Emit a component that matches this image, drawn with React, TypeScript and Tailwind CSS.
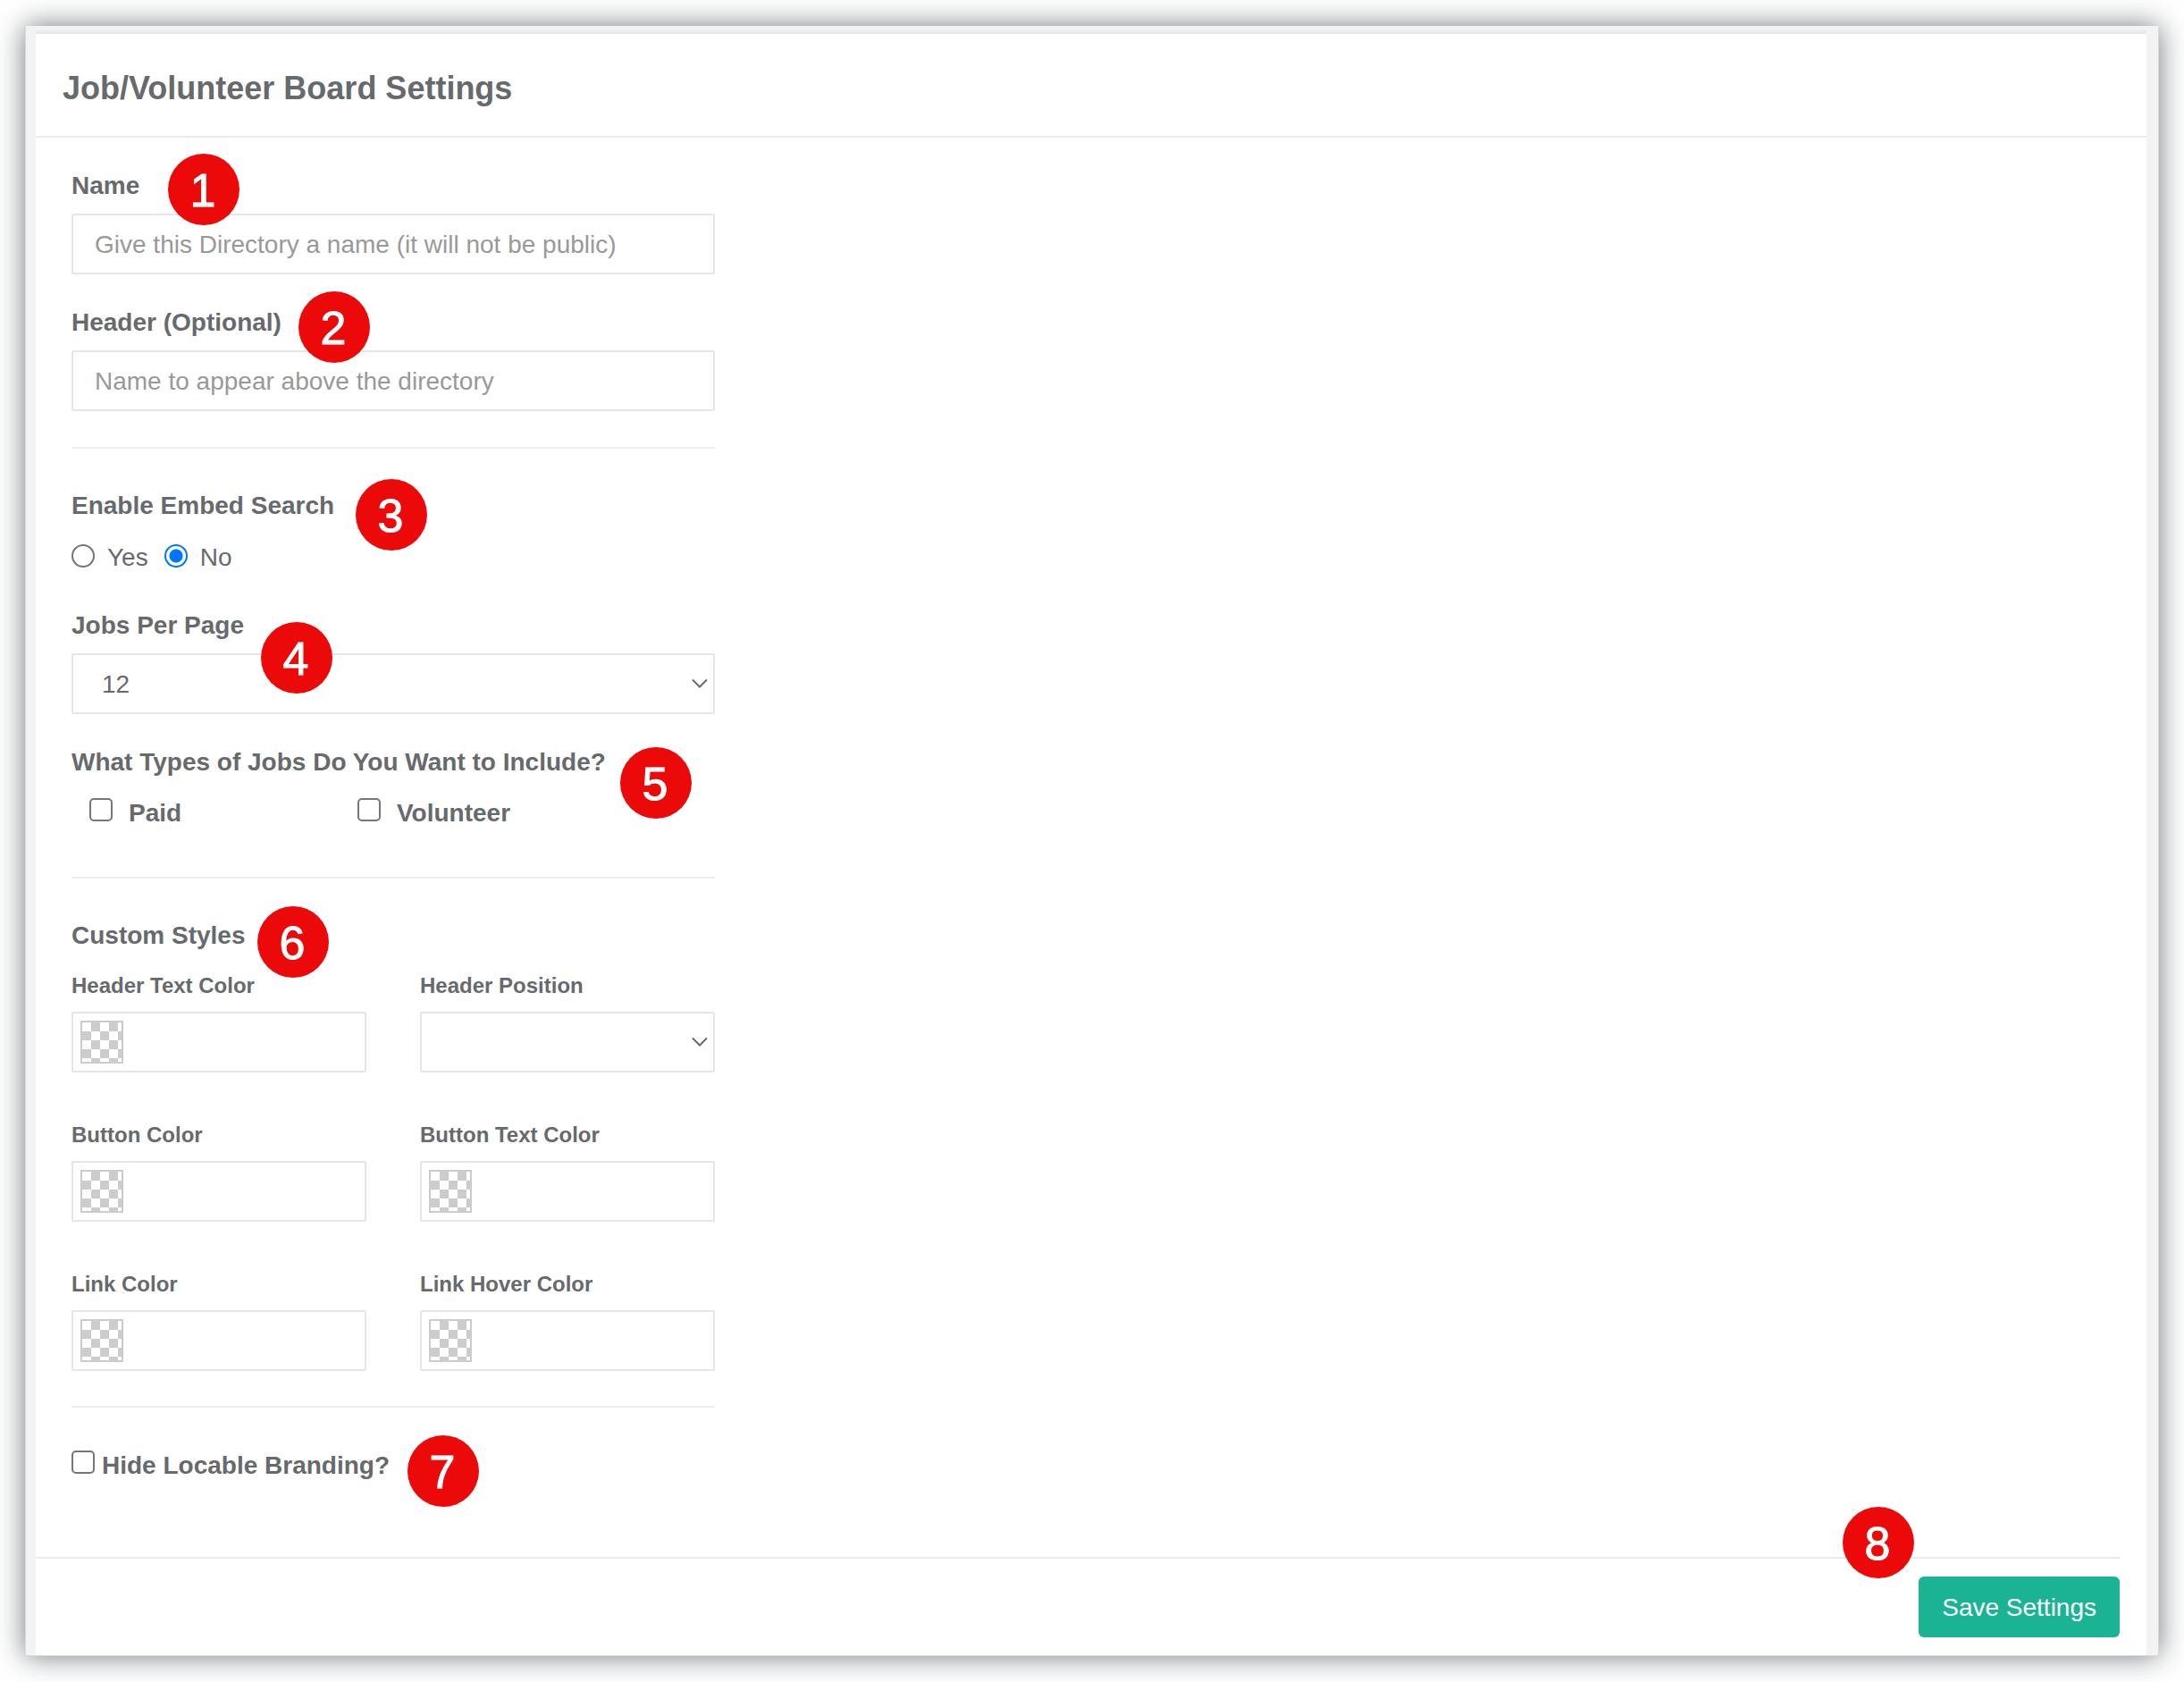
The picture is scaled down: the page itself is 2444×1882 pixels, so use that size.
import { useId, type ReactNode } from "react";

const control =
  "h-[68px] w-full rounded-[2px] border-2 border-[#e5e6e7] bg-white text-[28px] leading-10 outline-none";

function Badge({ n, className }: { n: number; className: string }) {
  return (
    <span
      className={`absolute z-10 flex size-20 items-center justify-center rounded-full bg-[#eb0909] pt-0.5 pr-0.5 text-[52px] leading-none text-white [-webkit-text-stroke:1px_#ffffff] ${className}`}
    >
      {n}
    </span>
  );
}

function Divider({ className }: { className: string }) {
  return <hr className={`border-t-2 border-[#eeeeee] ${className}`} />;
}

function Chevron() {
  return (
    <svg
      viewBox="0 0 18 12"
      className="pointer-events-none absolute top-7 right-2 h-3 w-[18px]"
      fill="none"
      stroke="#676a6c"
      strokeWidth="2"
      aria-hidden="true"
    >
      <path d="M1 1.5 L9 9.5 L17 1.5" />
    </svg>
  );
}

function Select({ id, options }: { id: string; options: string[] }) {
  return (
    <div className="relative">
      <select id={id} className={`${control} appearance-none pt-0.5 pr-10 pl-8`}>
        {options.map((o) => (
          <option key={o} value={o}>
            {o}
          </option>
        ))}
      </select>
      <Chevron />
    </div>
  );
}

function TextField({
  label,
  placeholder,
  children,
}: {
  label: string;
  placeholder: string;
  children: ReactNode;
}) {
  const id = useId();
  return (
    <div className="relative">
      <label htmlFor={id} className="mb-[11px] block font-bold">
        {label}
      </label>
      <input
        id={id}
        type="text"
        placeholder={placeholder}
        className={`${control} block px-6 pt-0.5 placeholder:text-[#999999]`}
      />
      {children}
    </div>
  );
}

function StyleLabel({ id, children }: { id: string; children: ReactNode }) {
  return (
    <label htmlFor={id} className="mb-3 block text-[24px] leading-[34px] font-bold">
      {children}
    </label>
  );
}

function ColorField({ label }: { label: string }) {
  const id = useId();
  return (
    <div>
      <StyleLabel id={id}>{label}</StyleLabel>
      <div className={`${control} flex items-center gap-3 px-2`}>
        <button
          type="button"
          aria-label={`Pick ${label}`}
          className="size-12 shrink-0 border-2 border-[#cccccc] bg-[conic-gradient(#cccccc_25%,#ffffff_0_50%,#cccccc_0_75%,#ffffff_0)] bg-[length:20px_20px]"
        />
        <input id={id} type="text" className="min-w-0 flex-1 bg-transparent outline-none" />
      </div>
    </div>
  );
}

const radio =
  "mt-[5px] size-[26px] appearance-none rounded-full border-2 border-[#767676] bg-white checked:border-[#0075ff] checked:bg-[radial-gradient(#0075ff_7px,#ffffff_8px)]";
const checkbox =
  "mt-[3px] size-[26px] shrink-0 appearance-none rounded-[5px] border-2 border-[#767676] bg-white checked:bg-[#0075ff]";

export default function App() {
  return (
    <div className="bg-white px-7 py-[29px] font-['Liberation_Sans',Arial,sans-serif] text-[28px] leading-10 text-[#676a6c]">
      <div className="border-x border-b border-[#d6dadc] bg-[#f3f3f4] pt-[5px] pr-[13px] pl-[11px] shadow-[0_0_30px_rgba(18,32,38,0.6)]">
        <main className="border-t-4 border-[#e7eaec] bg-white">
          <header className="border-b-2 border-[#e7eaec] px-[30px] pt-[38px] pb-[30px]">
            <h1 className="text-[36px] leading-[46px] font-bold">Job/Volunteer Board Settings</h1>
          </header>

          <form onSubmit={(e) => e.preventDefault()}>
            <div className="px-10 pt-[34px]">
              <div className="w-full max-w-[720px]">
                <div className="flex flex-col gap-[34px]">
                  <TextField
                    label="Name"
                    placeholder="Give this Directory a name (it will not be public)"
                  >
                    <Badge n={1} className="-top-4 left-[108px]" />
                  </TextField>
                  <TextField
                    label="Header (Optional)"
                    placeholder="Name to appear above the directory"
                  >
                    <Badge n={2} className="-top-[15px] left-[254px]" />
                  </TextField>
                </div>

                <Divider className="mt-10 mb-11" />

                <div className="relative">
                  <fieldset>
                    <legend className="mb-[18px] font-bold">Enable Embed Search</legend>
                    <div className="flex gap-[18px]">
                      <label className="flex items-start gap-[14px]">
                        <input type="radio" name="search" value="yes" className={radio} />
                        Yes
                      </label>
                      <label className="flex items-start gap-[14px]">
                        <input
                          type="radio"
                          name="search"
                          value="no"
                          defaultChecked
                          className={radio}
                        />
                        No
                      </label>
                    </div>
                  </fieldset>
                  <Badge n={3} className="-top-2.5 left-[318px]" />
                </div>

                <div className="relative mt-9">
                  <label htmlFor="per-page" className="mb-[11px] block font-bold">
                    Jobs Per Page
                  </label>
                  <Select id="per-page" options={["12", "24", "48"]} />
                  <Badge n={4} className="top-4 left-[212px]" />
                </div>

                <div className="relative mt-[34px]">
                  <fieldset>
                    <legend className="mb-[17px] font-bold">
                      What Types of Jobs Do You Want to Include?
                    </legend>
                    <div className="flex pl-5 font-bold">
                      <label className="flex w-[300px] items-start gap-[18px]">
                        <input type="checkbox" className={checkbox} />
                        Paid
                      </label>
                      <label className="flex items-start gap-[18px]">
                        <input type="checkbox" className={checkbox} />
                        Volunteer
                      </label>
                    </div>
                  </fieldset>
                  <Badge n={5} className="top-[3px] left-[614px]" />
                </div>

                <Divider className="mt-[51px] mb-11" />

                <section className="relative">
                  <h2 className="mb-[19px] font-bold">Custom Styles</h2>
                  <div className="grid grid-cols-2 gap-x-[60px] gap-y-[53px]">
                    <ColorField label="Header Text Color" />
                    <div>
                      <StyleLabel id="header-position">Header Position</StyleLabel>
                      <Select id="header-position" options={["", "Left", "Center", "Right"]} />
                    </div>
                    <ColorField label="Button Color" />
                    <ColorField label="Button Text Color" />
                    <ColorField label="Link Color" />
                    <ColorField label="Link Hover Color" />
                  </div>
                  <Badge n={6} className="-top-[13px] left-[208px]" />
                </section>

                <Divider className="mt-[39px] mb-[45px]" />

                <div className="relative">
                  <label className="flex items-start gap-2 font-bold">
                    <input type="checkbox" className={checkbox} />
                    Hide Locable Branding?
                  </label>
                  <Badge n={7} className="-top-3.5 left-[376px]" />
                </div>
              </div>
            </div>

            <footer className="relative mt-[82px] mr-[30px] flex justify-end border-t-2 border-[#e7eaec] py-5">
              <Badge n={8} className="-top-[58px] right-[230px]" />
              <button
                type="submit"
                className="h-[68px] rounded-md bg-[#1ab394] px-[26px] pt-0.5 text-white"
              >
                Save Settings
              </button>
            </footer>
          </form>
        </main>
      </div>
    </div>
  );
}
